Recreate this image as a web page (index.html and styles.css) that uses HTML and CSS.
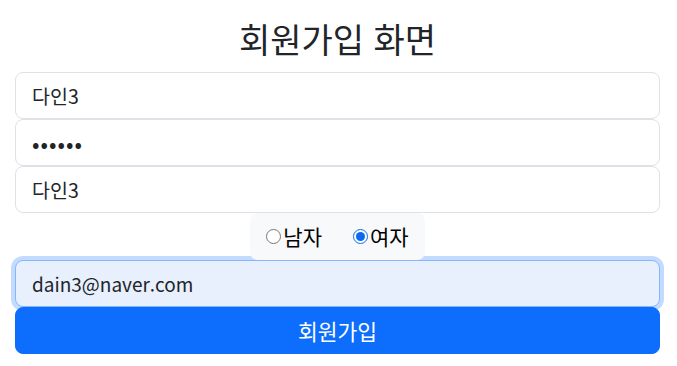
FILE: index.html
```html
<!DOCTYPE html>
<html lang="ko">
<head>
  <meta charset="UTF-8" />
  <meta name="viewport" content="width=device-width, initial-scale=1.0"/>
  <title>회원가입</title>
  <link rel="stylesheet" href="styles.css">
</head>
<body>
  <form class="signup">
    <h1 class="title">회원가입 화면</h1>
    <input class="field" type="text" value="다인3" placeholder="아이디">
    <input class="field field-pw" type="password" value="123456" placeholder="비밀번호">
    <input class="field" type="text" value="다인3" placeholder="이름">

    <div class="gender">
      <label class="gender-item"><input type="radio" name="gender" value="m">남자</label>
      <label class="gender-item"><input type="radio" name="gender" value="f" checked>여자</label>
    </div>

    <input class="field field-focus" type="email" value="dain3@naver.com" placeholder="이메일">
    <button class="submit" type="submit">회원가입</button>
  </form>
</body>
</html>
```

FILE: styles.css
```css
* {
  margin: 0;
  padding: 0;
  box-sizing: border-box;
}

body {
  font-family: "Noto Sans CJK KR", "Noto Sans", sans-serif;
  color: #212529;
  background: #fff;
}

.signup {
  display: flex;
  flex-direction: column;
  padding: 19px 17px 0 15px;
}

.title {
  font-size: 34px;
  font-weight: 400;
  line-height: 1.2;
  text-align: center;
  margin-bottom: 12px;
}

.field {
  display: block;
  width: 100%;
  height: 47px;
  padding: 0 16px;
  font-family: inherit;
  font-size: 19.5px;
  color: #212529;
  background: #fff;
  border: 1px solid #dee2e6;
  border-radius: 8px;
  outline: none;
}

.field-pw {
  font-size: 22px;
  letter-spacing: 1px;
}

.field-focus {
  font-size: 19px;
  background: #e8f0fe;
  border-color: #86b7fe;
  box-shadow: 0 0 0 4px rgba(13, 110, 253, 0.25);
}

.gender {
  position: relative;
  z-index: 1;
  align-self: center;
  display: flex;
  gap: 31px;
  height: 47px;
  align-items: center;
  padding: 0 16px;
  background: #f8f9fa;
  border-radius: 8px;
}

.gender-item {
  display: flex;
  align-items: center;
  font-size: 21px;
  color: #000;
}

.gender-item input {
  width: 15px;
  height: 15px;
  margin: 0 2px 0 0;
  accent-color: #0b6bf0;
}

.submit {
  position: relative;
  z-index: 1;
  height: 47px;
  width: 100%;
  font-family: inherit;
  font-size: 21.5px;
  color: #fff;
  background: #0d6efd;
  border: 1px solid #0d6efd;
  border-radius: 8px;
}
```
